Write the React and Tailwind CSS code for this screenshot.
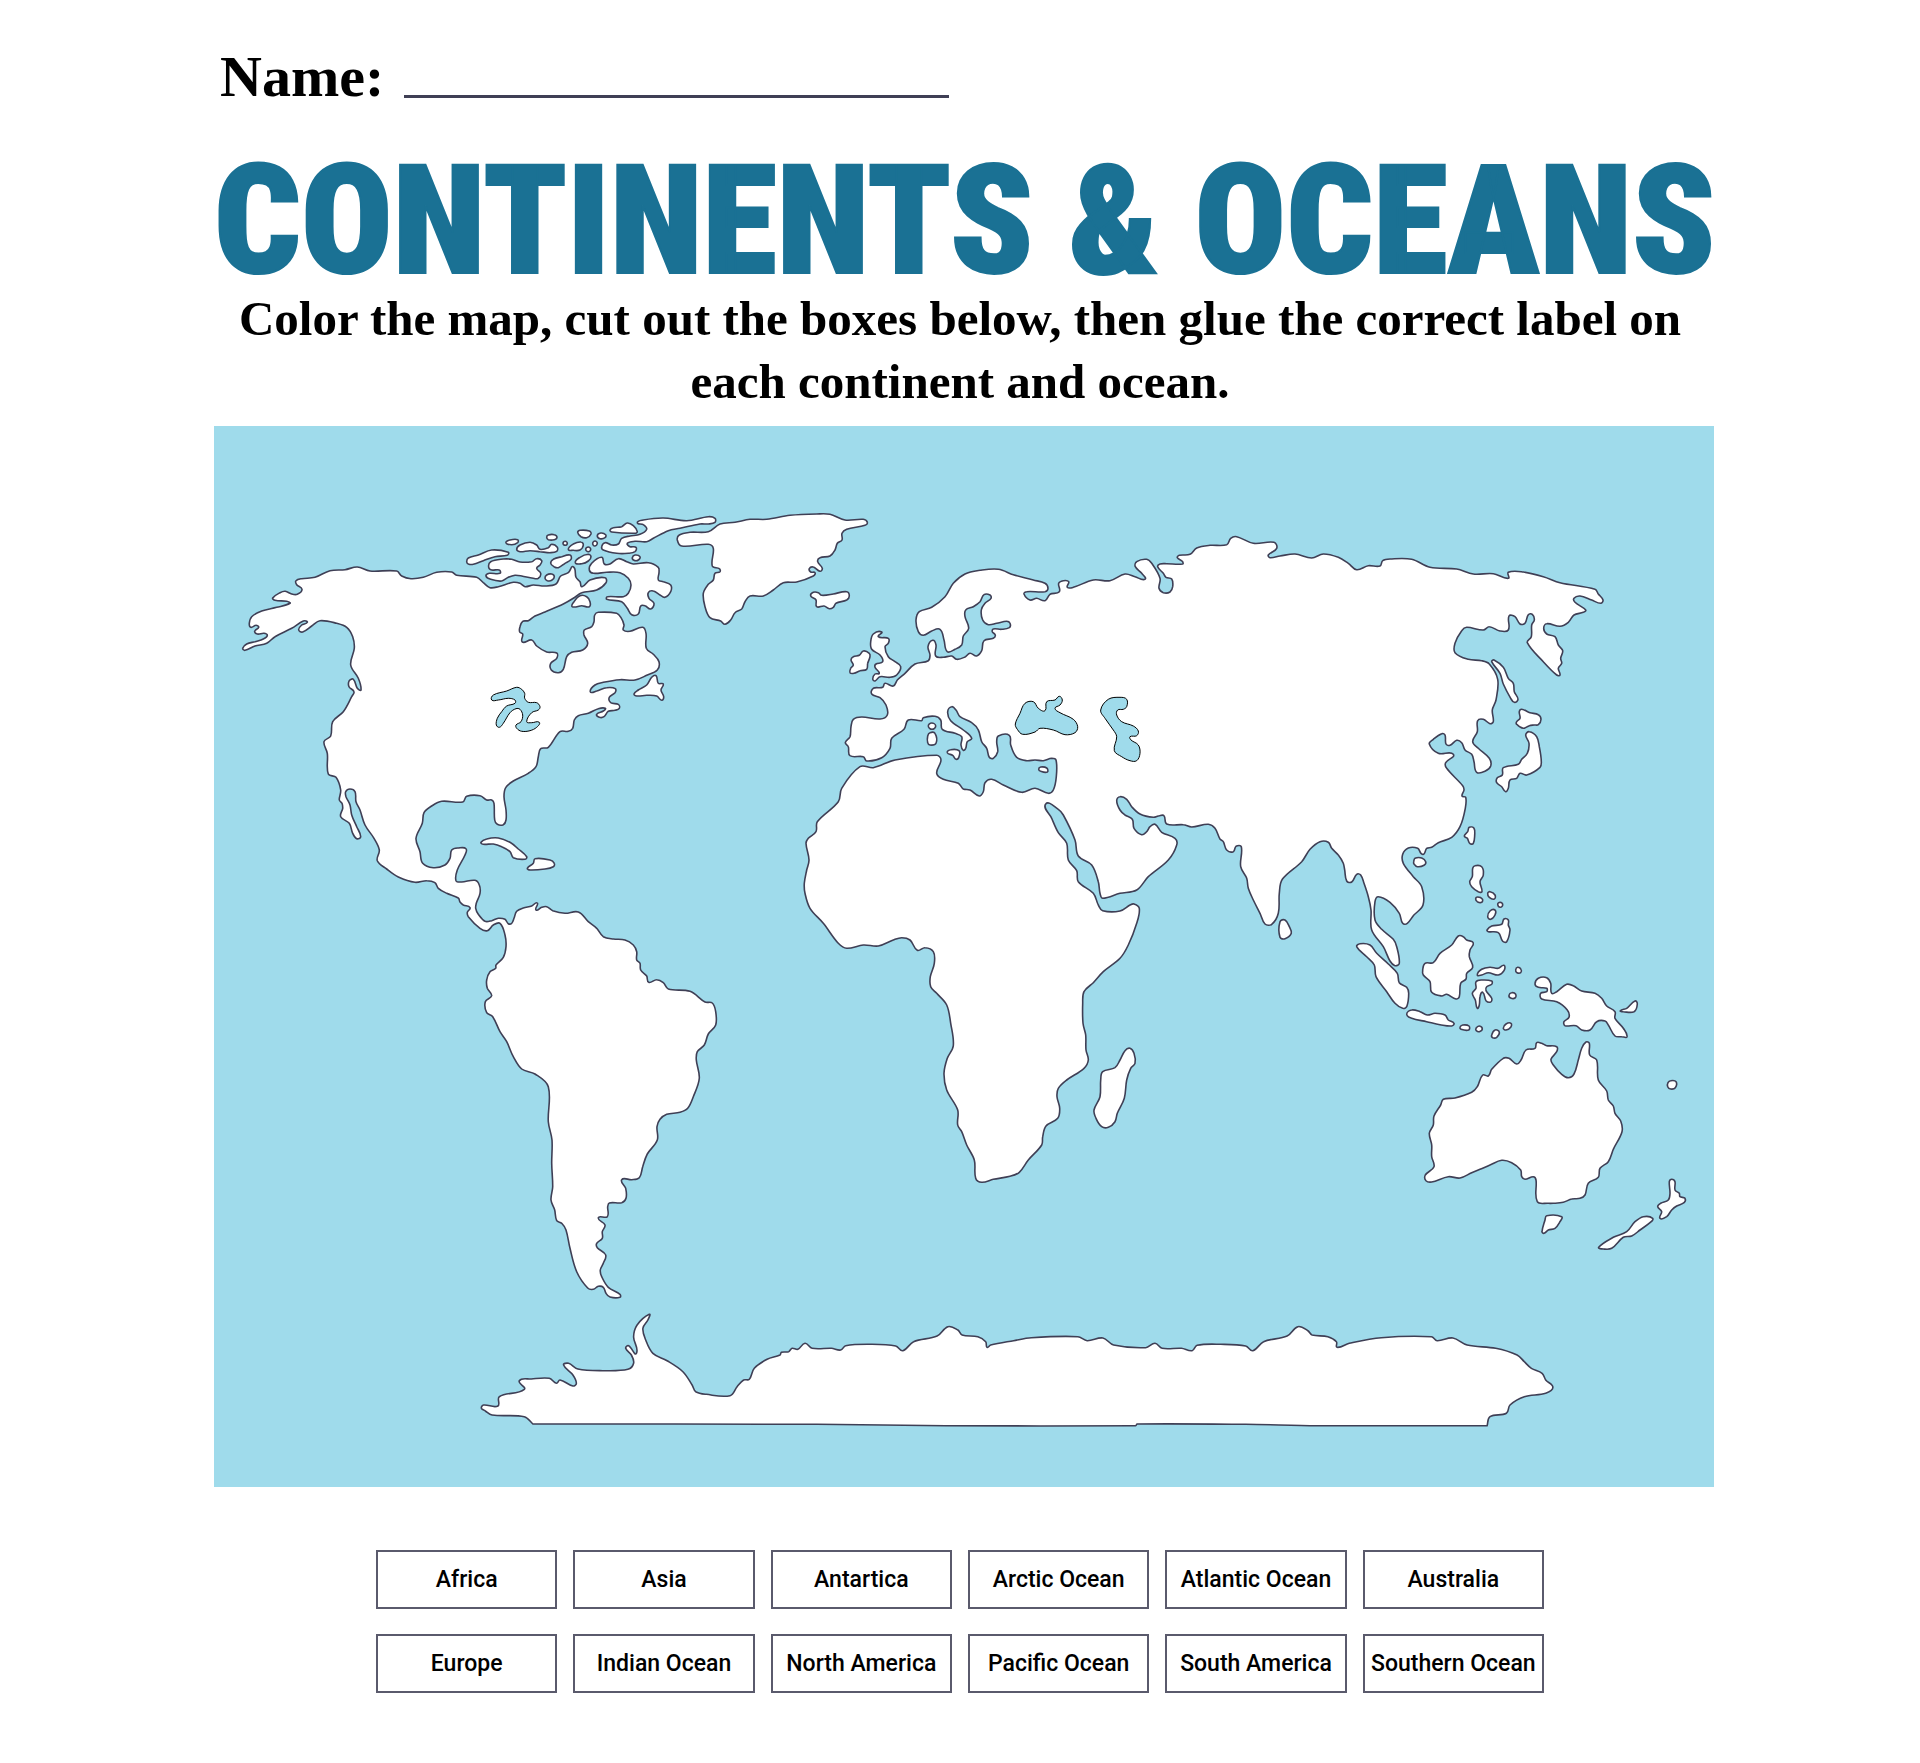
const LABELS = [
  "Africa", "Asia", "Antartica", "Arctic Ocean", "Atlantic Ocean", "Australia",
  "Europe", "Indian Ocean", "North America", "Pacific Ocean", "South America", "Southern Ocean",
];

// Each sheet of the map has its own origin and scale: [x, y, units per px across, units per px down].
const SHEETS = {
  A: [6, 64, 3, 3],
  B: [386, 64, 3, 3],
  C: [246, 454, 3, 3],
  D: [566, 104, 3, 3],
  E: [566, 454, 3, 3],
  F: [906, 94, 3, 3],
  G: [1126, 254, 3, 3],
  H: [1186, 594, 3, 3],
  I: [246, 874, 1.4, 3],
};

const AMERICAS = `A 68,475 80,462 105,455 130,447 142,436 132,430 112,432 104,424 116,412 108,406 92,412 88,400 95,380 125,363 170,352 210,340 200,334 165,331 158,324 180,308 196,304 215,312 232,313 246,298 230,284 228,272 245,266 285,262 330,242 375,239 412,231 450,243 530,243 545,258 573,266 610,262 650,247 695,246 710,256 770,262 790,278 810,293 835,290 880,277 900,280 915,290 940,285 975,288 1008,282 1022,258 1045,248 1060,230 1068,262 1080,275 1086,290 1110,270 1155,263 1158,278 1130,300 1085,308 1060,325 1030,342 975,366 945,378 925,392 908,394 900,410 899,426 908,432 907,456 935,450 950,468 980,486 1010,489 1010,505 992,520 994,540 1015,548 1030,538 1040,500 1055,487 1088,480 1103,460 1092,435 1093,420 1115,410 1122,395 1124,375 1135,367 1190,370 1203,383 1212,405 1210,420 1230,424 1268,412 1278,430 1279,475 1300,493 1317,515 1312,540 1280,556 1245,570 1200,569 1150,577 1125,585 1111,605 1130,603 1160,593 1186,596 1185,608 1168,622 1172,638 1195,643 1198,655 1185,661 1165,664 1152,680 1138,682 1130,673 1150,663 1156,655 1135,656 1105,670 1075,677 1063,690 1058,715 1045,724 1020,725 985,772 962,776 955,800 948,830 925,850 880,873 857,893 852,920 858,960 858,990 850,1004 832,1003 824,990 822,940 815,930 800,930 780,917 740,919 728,936 665,934 635,948 612,968 607,1000 588,1045 600,1085 608,1120 640,1133 675,1125 690,1105 695,1080 715,1074 738,1076 735,1095 712,1140 708,1172 725,1176 765,1171 778,1185 780,1210 769,1240
C 47,85 55,103 75,124 95,122 115,115 135,118 145,131 155,130 162,115 170,94 190,84 215,78 232,69 228,90 245,82 260,80 278,92 315,100 355,96 385,125 410,145 430,170 460,177 495,180 520,195 530,215 530,240 540,250 542,270 560,288 566,307 590,299 610,308 625,327 690,334 735,366 757,369 767,395 767,435 745,462 733,495 712,515 709,540 718,595 700,650 683,685 660,697 620,703 600,718 591,740 592,780 562,822 548,860 538,893 515,899 485,899 497,925 498,955 485,968 448,969 443,980 442,1010 415,1013 435,1035 427,1055 427,1075 410,1090 412,1103 437,1125 430,1150 421,1170 425,1190 445,1222 480,1243 480,1252 450,1251 438,1240 430,1222 415,1219 400,1228 383,1224 350,1175 330,1105 318,1050 305,1030 290,1022 284,990 273,960 278,920 275,850 276,780 265,725 265,620 225,582 185,567 160,530 140,485 120,455 98,410 80,398 76,365 95,347 82,325 80,300 90,275 107,265 108,255 130,232 138,200 135,165 120,130 100,135 82,152 60,145 25,110 22,97 30,83 10,75 0,66
A 715,1224 680,1210 655,1195 645,1178 620,1172 585,1177 535,1161 500,1137 472,1112 478,1080 462,1045 435,1005 420,960 408,935 405,905 390,897 377,905 378,920 390,945 395,975 410,1010 422,1040 410,1046 398,1030 388,1000 362,980 368,955 366,940 358,930 362,900 348,862 325,852 322,790 312,755 332,738 338,695 370,665 395,620 402,605 387,590 388,572 400,568 412,595 423,600 415,565 392,525 403,475 398,440 380,412 350,400 300,392 275,408 248,426 236,420 245,405 262,397 250,393 215,415 165,440 140,460 105,468 75,481`;

const EURASIA_AFRICA = `D 196,638 210,620 213,590 220,568 245,561 300,567 322,555 318,525 300,503 275,492 280,475 308,472 315,460 340,468 352,450 375,430 405,402 445,392 450,375 444,350 458,331 468,345 467,378 490,382 515,378 530,388 555,381 570,370 590,378 605,362 612,332 640,325 646,315 637,305 640,297 665,298 688,293 690,280 680,274 650,280 625,284 608,270 604,240 615,220 633,205 630,195 612,194 600,215 580,230 557,240 555,260 566,295 550,318 545,345 525,358 502,365 492,330 480,298 455,303 430,316 415,305 408,270 418,245 455,232 495,200 520,160 555,132 600,121 655,118 700,134 760,150 795,160 804,175 795,185 740,185 732,192 750,210 770,205 795,212 810,193 838,185 836,160 850,152 866,155 862,172 880,172 940,150 990,152 1035,132 1065,140 1095,148 1085,130 1066,110 1070,95 1100,88 1115,100 1140,145 1137,175 1150,188 1170,186 1178,170 1175,147 1158,142 1150,130 1133,110 1140,102
F 140,131 188,132 187,124 172,113 178,106 210,103 230,84 270,76 320,74 332,55 350,50 400,70 462,67 470,85 445,105 450,113 480,108 525,102 575,114 610,102 655,112 685,130 710,149 745,137 780,138 788,122 810,117 875,118 930,142 1010,147 1060,162 1120,161 1165,175 1165,157 1210,156 1270,170 1320,188 1425,208 1435,222 1449,240 1442,250 1415,240 1380,228 1362,235 1365,247 1397,270 1390,277 1362,285 1345,307 1320,319 1280,311 1271,325 1280,342 1305,350 1315,375 1328,392 1322,415 1325,430 1315,445 1320,465 1310,465 1270,425 1222,368 1234,350 1235,315 1243,300 1237,283 1225,284 1215,310 1200,312 1185,290 1167,288 1165,330 1140,333 1108,320 1090,330 1040,322 1025,332 1005,370 1005,398 1045,418 1085,422 1108,432 1133,478 1128,540 1117,570 1120,605 1110,611 1090,598 1073,602 1072,635 1058,665 1075,685 1108,715 1112,738 1095,754 1070,757 1062,725 1055,703 1035,690 1025,668 1010,661 990,676 978,672 975,645 965,641 940,658 928,672 955,700 1000,703 977,728 980,745 1028,797 1032,810 1026,828 1037,832 1036,865 1020,920 995,952 955,968 935,982 920,985 912,1002 903,1000 893,985 865,984 848,1003 850,1030 880,1070 905,1100 909,1155 880,1187 862,1210 848,1210 838,1180 810,1147 775,1130 765,1145 765,1200
G 125,748 160,778 170,800 178,850 165,857 150,843 130,800 95,750 93,690 85,650 72,610 62,585 50,583 35,606 20,603 14,570
F 670,1030 655,1005 635,985 625,967 600,965 570,988 545,1025 487,1078 478,1120 475,1180 455,1213 435,1212 420,1180 400,1140 385,1105 380,1075 362,1040 364,980 348,979 340,995 320,990 310,965 300,957 285,925 265,913 215,921 190,914 140,912 132,887 118,887 100,892 60,882 35,860 20,838
D 1020,800 1010,812 1020,840 1035,855 1057,868 1062,895 1085,914 1100,905 1110,890 1125,883 1145,907 1185,925 1190,945 1165,990 1105,1040 1070,1080 1020,1090 968,1105 960,1090 955,1055 935,1005 895,978 885,930 850,855 835,838 797,822 815,865 835,908 860,940 865,990 890,1022 895,1055 940,1090 955,1125 968,1142 1020,1143
E 1050,75 1062,72 1078,85 1070,130 1045,195 1020,235 970,275 940,308 912,335 908,370 909,430 917,465 918,510 925,540 912,565 860,600 835,625 831,650 839,685 833,715 798,738 788,770 785,795 745,840 718,877 690,889 640,898 605,907 587,895 583,840 560,795 545,755 533,735 533,690 500,630 492,580 502,535 520,497 512,430 500,375 470,340 452,320 451,290 463,250 460,215 435,203 412,211 390,180 365,173 340,180 295,198 250,195 200,205 175,190 130,130 90,85 75,40 73,10
D 80,1020 87,990 78,940 85,925 108,905 112,875 175,815 185,775 240,710 280,713 345,690 470,676 483,690 470,730 490,748 535,760 550,777 570,780 598,798 610,785 615,758 635,748 670,765 725,787 765,775 805,790 820,780 829,740 828,690 815,685 790,692 765,690 740,692 710,682 692,645 688,616 655,618 650,635 653,665 640,685 628,682 620,655 605,635 595,600 575,578 540,560 528,540 515,530 503,545 512,572 550,600 575,625 562,635 557,655 550,661 543,645 545,620 525,610 487,598 482,570 465,559 430,563 425,572 385,570 372,598 335,625 330,655 305,683 260,693 250,680 210,677 205,650`;

const AUSTRALIA = `H 410,68 425,70 440,77 470,80 470,95 453,118 460,135 485,163 505,173 522,162 535,120 545,85 558,66 568,70 569,105 590,120 595,180 620,213 625,240 640,258 645,280 662,303 666,335 640,388 625,425 600,445 595,472 565,490 555,525 540,535 515,537 490,547 460,550 445,550 412,545 408,480 400,470 375,478 365,470 362,450 335,428 305,421 270,435 240,448 215,458 180,474 145,470 95,486 78,482 76,465 102,440 95,410 95,375 88,340 100,315 102,288 122,255 130,238 165,234 215,217 232,200 248,165 265,168 275,148 310,115 327,115 350,132 363,120 378,90 405,85`;

const ANTARCTICA = `I 30,325 33,315 53,318 55,290 90,268 83,242 100,237 125,235 135,250 140,240 158,258 163,250 158,225 145,195 152,190 165,207 200,212 235,208 243,190 240,165 232,145 236,137 247,160 243,110 248,75 265,43 263,60 256,85 260,120 270,160 290,182 312,215 325,255 330,275 345,283 378,287 388,260 397,240 405,238 412,205 430,178 448,165 450,157 460,155 465,145 473,148 483,130 493,145 520,145 533,150 540,137 575,133 610,138 620,152 635,125 668,108 683,80 697,90 703,105 725,110 736,125 738,142 743,135 775,122 800,113 865,110 878,122 900,114 915,135 960,143 973,130 983,145 1010,145 1025,152 1032,136 1065,133 1100,138 1110,152 1125,125 1158,108 1173,80 1187,92 1193,105 1215,110 1227,125 1228,142 1245,130 1290,113 1360,110 1368,122 1390,114 1410,135 1450,145 1480,165 1490,185 1500,205 1515,220 1520,240 1530,262 1520,280 1490,290 1470,315 1465,340 1442,350 1438,377 1438,377 1200,377 1100,373 948,372 946,377 680,377 500,373 102,372 102,372 90,350 45,345 35,332`;

const GREENLAND = `B 232,150 238,135 270,127 325,125 360,102 405,97 450,88 500,88 570,76 650,72 690,73 735,90 790,88 802,97 795,106 740,118 726,130 726,150 712,160 705,180 690,198 660,203 653,215 667,235 660,244 640,231 628,236 632,246 645,248 640,258 590,276 550,278 520,300 490,318 450,318 435,335 425,357 405,368 392,390 375,403 362,393 330,383 315,350 310,310 325,283 340,270 345,250 360,245 358,236 337,228 340,175 325,163 245,168`;

const ISLANDS = [
  // Canadian Arctic
  "A 740,215 745,204 775,195 815,180 865,187 862,196 825,200 790,212 760,223 745,222",
  "A 806,232 812,215 850,207 875,208 900,216 935,215 950,206 965,212 960,225 950,235 962,250 955,265 940,265 905,258 885,256 865,262 845,273 812,268 798,258 808,250 840,250 838,240 815,240",
  "A 975,265 980,255 995,252 1003,260 995,271 982,272",
  "A 992,220 1000,208 1025,200 1050,195 1053,208 1035,220 1015,233 1002,230",
  "A 1066,218 1080,202 1105,193 1113,200 1105,213 1085,221",
  "A 1045,178 1060,162 1083,156 1090,165 1080,180 1060,181",
  "A 1029,160 1036,154 1042,160 1035,166",
  "A 980,142 985,135 1003,134 1011,142 1003,149 985,149",
  "A 858,158 870,150 893,149 893,158 875,164",
  "A 890,178 900,165 930,157 950,165 960,178 985,173 995,163 1012,172 1010,184 990,188 960,185 930,182 900,185",
  "A 1073,127 1080,121 1108,123 1113,132 1100,143 1083,140",
  "A 1132,137 1142,129 1157,134 1155,143 1140,146",
  "A 1118,160 1125,153 1132,160 1124,168",
  "A 1097,178 1105,171 1112,178 1105,185",
  "A 1170,120 1180,113 1205,110 1222,99 1240,107 1252,125 1245,130 1175,126",
  "A 1237,203 1245,195 1260,200 1255,210 1242,211",
  "A 1057,350 1062,335 1080,317 1100,320 1110,335 1108,350 1085,347",
  "A 1108,240 1115,220 1145,202 1153,222 1170,222 1195,206 1220,215 1240,222 1285,218 1315,232 1317,248 1315,270 1330,275 1352,285 1352,305 1335,322 1320,315 1300,303 1285,308 1287,325 1302,340 1292,357 1275,347 1262,348 1255,372 1235,374 1222,355 1205,335 1160,328 1162,320 1210,320 1225,310 1233,285 1225,265 1200,248 1160,247 1120,250",
  "B 112,98 130,90 190,84 260,92 325,80 345,85 345,97 325,102 300,102 240,115 205,122 160,145 140,155 105,154 82,160 90,170 108,172 105,185 85,190 50,190 10,180 5,170 15,158 35,165 55,162 65,145 90,138 120,133 140,118 130,104",
  // North Atlantic and the Caribbean
  "B 102,612 115,600 140,585 155,562 168,557 175,580 190,582 183,600 191,620 185,631 170,618 140,616 110,618",
  "B 632,318 640,307 655,308 665,316 700,312 740,305 748,318 740,330 708,340 700,352 688,356 672,348 650,350 648,330",
  "B 750,548 752,535 760,525 753,510 760,500 778,496 790,483 808,490 810,500 803,520 800,538 780,542 762,550",
  "D 272,335 280,312 305,306 295,320 325,325 325,340 315,350 325,380 345,395 362,410 350,435 330,442 300,440 285,453 278,447 285,432 298,430 285,412 288,402 308,395 300,375 275,358",
  "A 783,1057 800,1047 835,1044 870,1057 895,1077 920,1100 915,1108 880,1103 870,1085 845,1070 820,1062 790,1063",
  "A 922,1135 940,1120 945,1106 990,1110 1003,1120 1000,1130 975,1137 930,1140",
  // Mediterranean
  "D 445,588 455,579 467,588 456,598",
  "D 443,618 450,608 465,610 468,640 450,645 443,638",
  "D 502,668 512,659 537,662 537,680 528,688 518,676",
  "D 776,718 782,711 800,714 802,726 782,724",
  // Indian Ocean
  "E 942,690 960,650 962,600 968,575 1005,563 1020,540 1035,512 1050,505 1062,520 1065,550 1052,565 1040,600 1033,655 1012,700 1005,725 985,742 965,740 948,715",
  "F 480,1205 495,1200 508,1220 514,1240 495,1256 480,1252",
  // East Asia
  "F 1115,425 1122,420 1150,442 1165,475 1180,490 1183,515 1194,538 1183,547 1172,535 1150,492 1140,460",
  "G 538,95 545,88 570,98 595,104 603,118 595,134 582,135 568,137 550,145 530,133 530,125 540,115",
  "G 557,165 568,155 590,170 598,200 604,245 600,262 560,285 540,280 530,295 510,300 505,325 497,335 485,320 470,308 472,293 487,285 490,263 535,253 545,238 562,220 567,190",
  "G 373,468 383,455 388,442 402,445 404,465 400,490 390,491 382,475",
  "G 221,545 225,535 245,534 257,545 252,556 232,560 222,552",
  "G 398,565 405,557 425,560 430,585 420,605 426,635 415,635 395,620 389,605 397,590",
  "G 407,657 413,651 427,657 425,667 412,665",
  "G 443,640 450,635 465,645 463,657 448,652",
  "G 473,673 480,667 488,674 481,682",
  "G 443,710 450,693 465,690 465,705 452,718",
  "G 441,750 455,738 485,733 492,717 505,720 505,735 510,750 500,785 488,784 475,758 445,755",
  // Indonesia and New Guinea
  "G 248,870 255,850 280,848 300,820 335,795 355,768 370,770 380,780 400,788 390,810 388,830 398,862 380,880 378,897 362,910 358,950 348,957 320,943 305,948 275,937 270,905 250,885",
  "G 50,800 60,791 90,795 110,820 145,852 172,880 178,908 200,922 206,940 200,980 188,985 165,970 140,935 108,890 103,855 80,830",
  "G 200,1003 215,990 240,995 262,1005 285,1000 315,1005 325,1020 342,1030 335,1038 300,1034 260,1025 215,1015",
  "G 360,1042 368,1035 387,1038 386,1050 363,1048",
  "G 408,1045 418,1038 427,1047 418,1055 409,1052",
  "G 455,1065 465,1050 478,1056 470,1072 458,1073",
  "G 490,1045 498,1032 513,1030 512,1042 498,1050",
  "G 412,885 425,868 450,862 475,865 492,856 492,872 475,885 445,878 425,885",
  "G 397,940 408,925 408,905 425,900 455,903 455,913 440,920 438,932 455,955 452,966 438,962 428,937 420,950 418,975 412,985 406,960",
  "G 527,870 533,862 543,868 542,878 531,878",
  "G 507,946 515,938 527,943 525,954 512,954",
  "G 585,912 595,895 620,893 632,910 635,940 650,935 680,913 700,917 725,933 765,940 785,955 800,978 825,995 825,1015 850,1045 861,1070 845,1070 825,1068 805,1035 795,1023 770,1025 750,1050 725,1050 708,1037 675,1037 672,1025 687,1012 682,990 650,965 605,957 602,940 620,935 620,925 595,922",
  "G 841,992 860,985 885,963 892,972 882,995 850,995",
  // Tasmania, New Zealand, Fiji
  "H 426,635 435,600 440,587 485,590 480,605 465,625 445,630 432,640",
  "H 596,682 640,652 680,635 705,605 730,590 758,595 750,608 720,630 695,648 670,652 635,685 610,687",
  "H 773,560 782,550 805,540 810,520 808,485 815,478 825,485 825,510 838,520 840,530 855,535 852,548 830,558 815,570 800,590 780,595 785,575",
  "H 804,188 812,182 828,185 826,203 812,207 803,200",
];

const LAKES = [
  "A 815,630 820,615 860,603 890,592 905,598 914,610 914,625 925,637 950,638 960,650 955,660 935,668 920,695 935,698 958,697 950,712 930,722 905,724 890,715 888,705 903,695 908,675 900,658 888,656 870,668 850,700 838,712 829,705 832,685 845,665 860,648 885,640 885,630 865,625 835,630",
  "D 706,582 720,550 735,520 760,515 775,535 795,542 800,515 825,510 838,499 847,510 840,525 825,535 840,548 880,568 893,590 885,608 855,614 820,600 780,595 765,606 728,613 712,598",
  "D 962,540 985,508 1020,502 1040,508 1040,530 1030,538 1013,540 1010,555 1025,575 1060,588 1075,603 1070,617 1050,620 1053,630 1075,645 1080,670 1070,692 1050,692 1025,680 1003,662 1010,620 1000,600 975,565",
];

function toPoints(text) {
  let sheet = SHEETS.A;
  const points = [];
  for (const token of text.split(/\s+/)) {
    if (SHEETS[token]) {
      sheet = SHEETS[token];
    } else {
      const [x, y] = token.split(",").map(Number);
      points.push([sheet[0] + x / sheet[2], sheet[1] + y / sheet[3]]);
    }
  }
  return points;
}

// A closed smooth curve through every point of the coast.
function coast(text) {
  const pts = toPoints(text);
  const n = pts.length;
  const at = (i) => pts[(i + n) % n];
  const tangent = (i) => {
    const dx = at(i + 1)[0] - at(i - 1)[0];
    const dy = at(i + 1)[1] - at(i - 1)[1];
    const len = Math.hypot(dx, dy) || 1;
    return [dx / len, dy / len];
  };
  let d = `M${pts[0][0].toFixed(1)} ${pts[0][1].toFixed(1)}`;
  for (let i = 0; i < n; i++) {
    const p = at(i);
    const q = at(i + 1);
    const reach = Math.hypot(q[0] - p[0], q[1] - p[1]) * 0.34;
    const t = tangent(i);
    const u = tangent(i + 1);
    d += `C${[p[0] + t[0] * reach, p[1] + t[1] * reach, q[0] - u[0] * reach, q[1] - u[1] * reach, q[0], q[1]]
      .map((v) => v.toFixed(1))
      .join(" ")}`;
  }
  return d + "Z";
}

function WorldMap() {
  const land = [AMERICAS, EURASIA_AFRICA, AUSTRALIA, ANTARCTICA, GREENLAND, ...ISLANDS];
  return (
    <svg viewBox="0 0 1500 1061" className="block w-full bg-[#9fdbeb]" role="img" aria-label="World map">
      <g className="fill-white stroke-[#3f3f55] stroke-[1.6]" strokeLinejoin="round">
        {land.map((text, i) => <path key={i} d={coast(text)} />)}
      </g>
      <g className="fill-[#9fdbeb] stroke-black stroke-1">
        {LAKES.map((text, i) => <path key={i} d={coast(text)} />)}
      </g>
    </svg>
  );
}

export default function App() {
  return (
    <main className="min-h-screen bg-white px-[206px] pt-[39px] pb-16 text-black">
      <div className="flex items-end gap-5 pl-[14px] font-['Liberation_Serif',serif]">
        <label htmlFor="name" className="text-[58px] leading-[76px] font-bold">Name:</label>
        <input
          id="name"
          type="text"
          className="mb-[17px] h-12 w-[545px] border-b-[3px] border-[#3f3f55] bg-transparent px-2 text-4xl outline-none"
        />
      </div>

      <h1 className="mt-10 pl-2 text-center font-['Roboto_Condensed','Roboto',sans-serif] text-[152px] leading-[132px] font-black whitespace-nowrap text-[#1a7194] [-webkit-text-stroke:2px_#1a7194] [stroke-linejoin:round]">
        CONTINENTS &amp; OCEANS
      </h1>

      <p className="text-center font-['Liberation_Serif',serif] text-[49px] leading-[63px] font-bold">
        Color the map, cut out the boxes below, then glue the correct label on each continent and ocean.
      </p>

      <figure className="mt-[13px] ml-2">
        <WorldMap />
      </figure>

      <ul className="mx-[170px] mt-[63px] grid grid-cols-6 gap-x-4 gap-y-[25px] font-['Roboto',sans-serif]">
        {LABELS.map((label) => (
          <li
            key={label}
            className="flex h-[59px] items-center justify-center border-2 border-[#5a5a6c] text-[23px] leading-7 font-medium whitespace-nowrap"
          >
            {label}
          </li>
        ))}
      </ul>
    </main>
  );
}
